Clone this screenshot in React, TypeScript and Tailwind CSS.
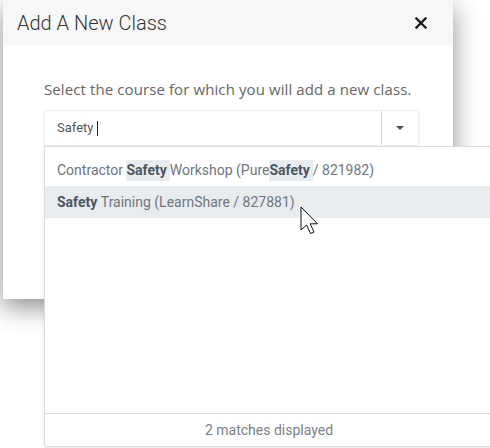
import React from "react";

const roboto = { fontFamily: "Roboto, 'Liberation Sans', sans-serif" };

function Hl({ children }: { children: React.ReactNode }) {
  return <span className="bg-[#e9ecef] font-bold text-[#4b5661] pr-[3px]">{children}</span>;
}

export default function App() {
  return (
    <div className="relative w-[490px] h-[448px] overflow-hidden bg-white" style={roboto}>
      <div className="ml-[3px] w-[450px] h-[299px] bg-white shadow-[0_8px_24px_rgba(0,0,0,0.45)] flex flex-col">
        <div className="h-[45px] bg-[#f7f7f7] flex items-center justify-between pl-[14px] pr-[26px]">
          <span className="text-[20px] font-light text-[#333]">Add A New Class</span>
          <svg width="12" height="12" viewBox="0 0 12 12">
            <path d="M1.5 1.5 L10.5 10.5 M10.5 1.5 L1.5 10.5" stroke="#1a1a1a" strokeWidth="2.3" strokeLinecap="square" />
          </svg>
        </div>
        <div className="pl-[41px] pt-[33px]">
          <div className="text-[15px] text-[#666] leading-[22px] tracking-[0.1px]" style={{ fontFamily: "'Open Sans', sans-serif" }}>
            Select the course for which you will add a new class.
          </div>
          <div className="mt-[10px] w-[375px] h-[36px] flex border border-[#f0f0f0] shadow-[0_1px_2px_rgba(0,0,0,0.08)] bg-white">
            <div className="flex-1 flex items-center pl-[12px] text-[13px] text-[#555]">
              Safety<span className="ml-[4px] inline-block w-[1px] h-[15px] bg-[#222]" />
            </div>
            <div className="w-[37px] border-l border-[#cfd6dc] flex items-center justify-center">
              <svg width="8" height="4" viewBox="0 0 8 4"><path d="M0 0 L8 0 L4 4 Z" fill="#4a5058" /></svg>
            </div>
          </div>
        </div>
      </div>

      <div className="absolute left-[44px] top-[146px] w-[450px] h-[301px] bg-white border border-[#dcdcdc] rounded-b-[3px] shadow-[0_2px_4px_rgba(0,0,0,0.08)] flex flex-col">
        <div className="flex-1 pt-[7px] text-[14px] text-[#6f767d]">
          <div className="h-[32px] flex items-center pl-[12px]">
            Contractor&nbsp;<Hl>Safety</Hl>Workshop (Pure<Hl>Safety</Hl>/ 821982)
          </div>
          <div className="h-[32px] flex items-center pl-[12px] bg-[#e9ecef]">
            <span className="font-bold text-[#4b5661]">Safety</span>&nbsp;Training (LearnShare / 827881)
          </div>
        </div>
        <div className="h-[33px] border-t border-[#dcdcdc] flex items-center justify-center text-[14px] text-[#7a7f85]">
          2 matches displayed
        </div>
      </div>

      <svg className="absolute left-[300px] top-[206px]" width="22" height="30" viewBox="0 0 22 30">
        <path d="M1 1 L1 24 L6.5 19 L10.5 27.5 L14 26 L10.2 17.8 L17.5 17.8 Z" fill="white" stroke="#111" strokeWidth="1" strokeLinejoin="miter" />
      </svg>
    </div>
  );
}
